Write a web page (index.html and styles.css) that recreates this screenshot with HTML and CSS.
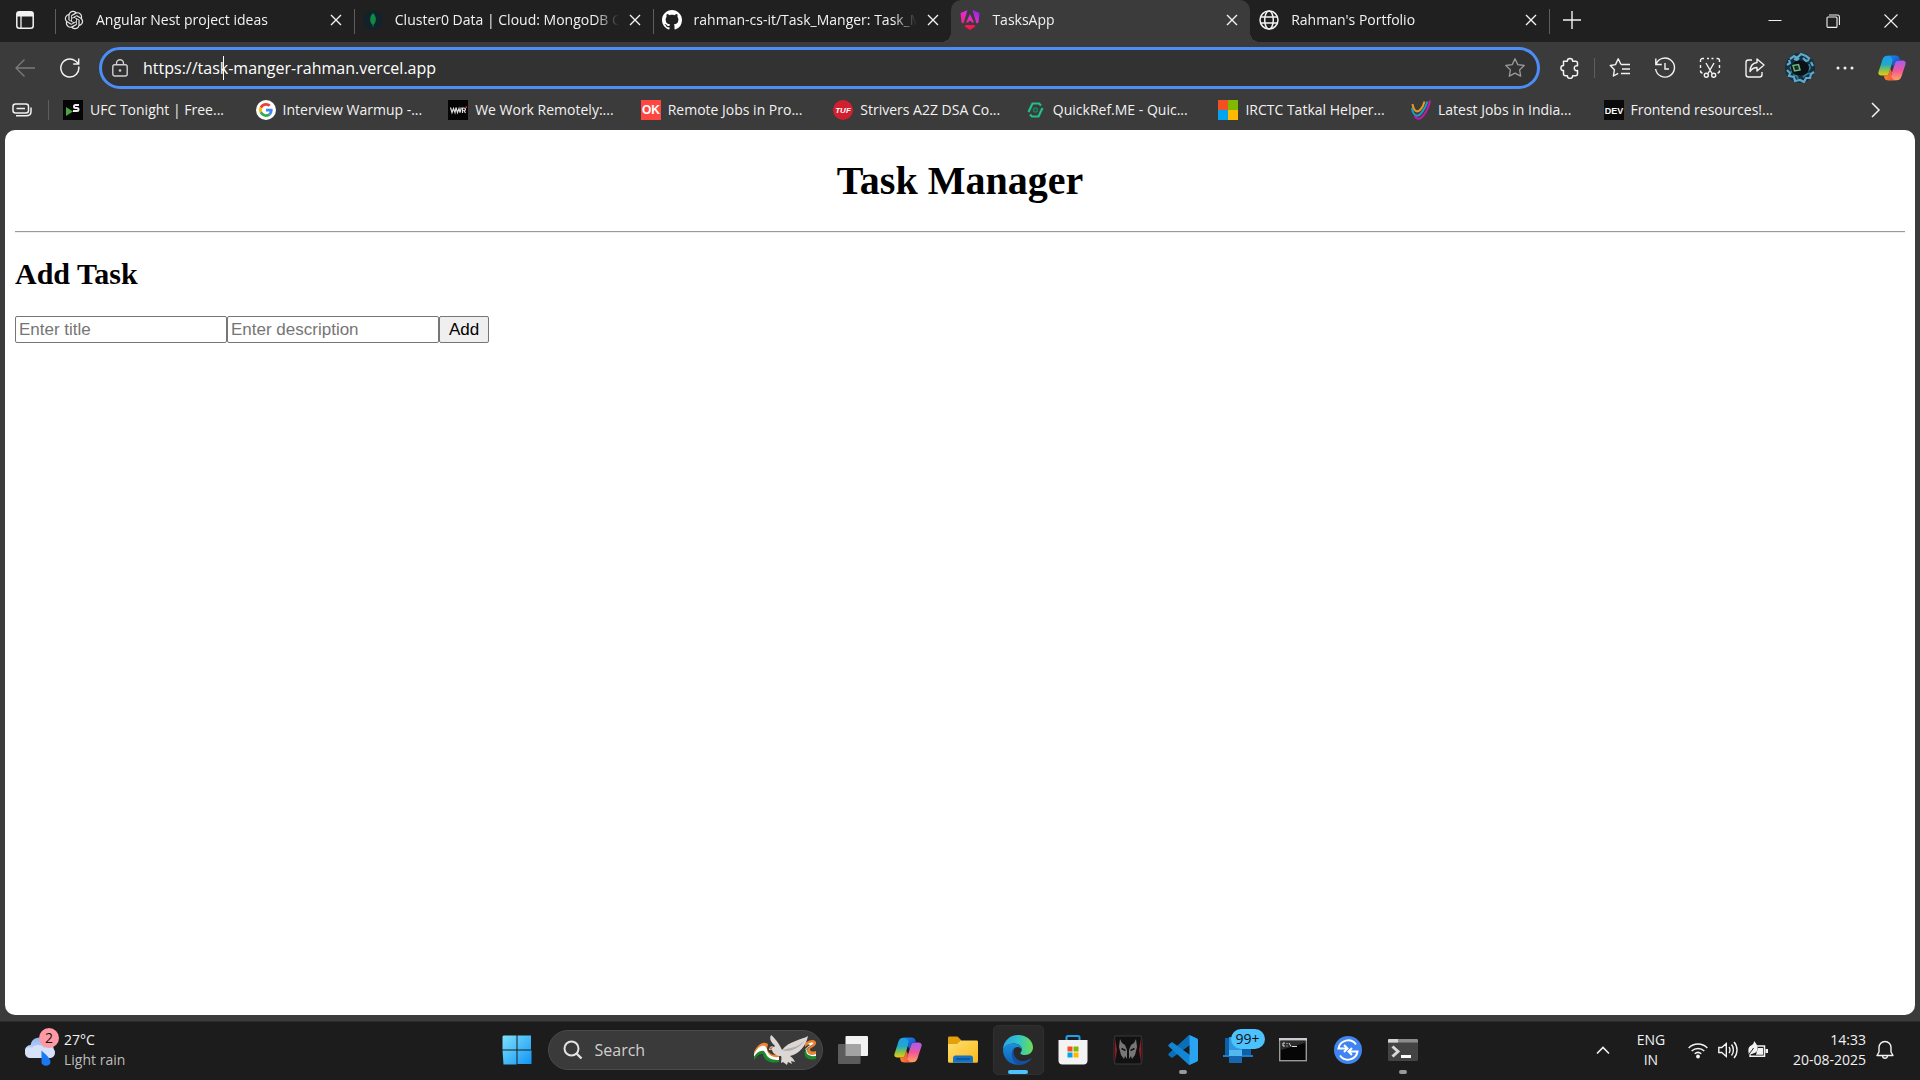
FILE: index.html
```html
<!DOCTYPE html>
<html lang="en">
<head>
<meta charset="utf-8">
<title>TasksApp</title>
<link rel="stylesheet" href="styles.css">
</head>
<body>
<svg class="defs" aria-hidden="true">
  <defs>
    <linearGradient id="cpA" x1="0" y1="0" x2="0" y2="1"><stop offset="0" stop-color="#1a9df0"/><stop offset=".45" stop-color="#24a9c8"/><stop offset=".75" stop-color="#8ec63f"/><stop offset="1" stop-color="#f5c518"/></linearGradient>
    <linearGradient id="cpB" x1="0" y1="0" x2="0" y2="1"><stop offset="0" stop-color="#a45cf5"/><stop offset=".5" stop-color="#f0569a"/><stop offset="1" stop-color="#ffa45c"/></linearGradient>
    <linearGradient id="cpC" x1="0" y1="0" x2="1" y2="1"><stop offset="0" stop-color="#1a8df5"/><stop offset="1" stop-color="#1741b8"/></linearGradient>
    <linearGradient id="cpD" x1="0" y1="0" x2="1" y2="0"><stop offset="0" stop-color="#f7892c"/><stop offset="1" stop-color="#f0453c"/></linearGradient>
    <linearGradient id="winG" x1="0" y1="0" x2="1" y2="1"><stop offset="0" stop-color="#7fe0fb"/><stop offset="1" stop-color="#0f95f5"/></linearGradient>
    <linearGradient id="ngG" x1="0" y1="1" x2="1" y2="0"><stop offset="0" stop-color="#f0267a"/><stop offset=".5" stop-color="#e32bd0"/><stop offset="1" stop-color="#7a22f0"/></linearGradient>
    <linearGradient id="cloudG" x1="0" y1="0" x2="0" y2="1"><stop offset="0" stop-color="#8fb4f2"/><stop offset="1" stop-color="#dfe9fb"/></linearGradient>
    <linearGradient id="folderG" x1="0" y1="0" x2="1" y2="1"><stop offset="0" stop-color="#ffdf70"/><stop offset="1" stop-color="#fbb91a"/></linearGradient>
    <linearGradient id="edgeA" x1="0" y1="0" x2="1" y2="0"><stop offset="0" stop-color="#2aa5e0"/><stop offset=".5" stop-color="#2fc3cf"/><stop offset="1" stop-color="#6be04f"/></linearGradient>
    <linearGradient id="edgeB" x1="0" y1="0" x2="0" y2="1"><stop offset="0" stop-color="#1b8fdc"/><stop offset="1" stop-color="#0f5fb8"/></linearGradient>
    <symbol id="copilot" viewBox="0 0 28 28">
      <path d="M18.5 2.500h-9C6 2.500 5.200 5.500 4.200 9L1.400 17.500C.6 20 2.500 21 4.500 21h3.500c2 0 2.800-1 3.400-3l3.400-11c.6-2.500 1.500-4.500 3.700-4.500z" fill="url(#cpA)"/>
      <path d="M9.500 25.500h9c3.500 0 4.300-3 5.300-6.500l2.800-8.500c.8-2.500-1.100-3.500-3.100-3.500h-3.500c-2 0-2.800 1-3.400 3l-3.400 11c-.6 2.500-1.500 4.500-3.700 4.500z" fill="url(#cpB)"/>
      <path d="M10 2.500h8.500c2 0 2.600 2 3 4.500h-1.500c-2 0-2.800 1-3.400 3l-1 3-1.800-3 1-3c-1-3-2.300-4.500-4.800-4.500z" fill="url(#cpC)"/>
      <path d="M18 25.500H9.500c-2 0-2.600-2-3-4.500H8c2 0 2.800-1 3.400-3l1-3.300 1.600 3.300-1 3.500c1 2.500 2.500 4 5 4z" fill="url(#cpD)"/>
    </symbol>
    <symbol id="close" viewBox="0 0 12 12"><path d="M1 1l10 10M11 1L1 11" fill="none" stroke="currentColor" stroke-width="1.400"/></symbol>
    <symbol id="globe" viewBox="0 0 20 20"><g fill="none" stroke="currentColor" stroke-width="1.500"><circle cx="10" cy="10" r="9"/><ellipse cx="10" cy="10" rx="4.300" ry="9"/><path d="M1.800 7h16.400M1.800 13h16.400"/></g></symbol>
  </defs>
</svg>

<header class="browser">
  <div class="tabstrip">
    <button class="workspace" aria-label="Tab actions">
      <svg width="18" height="18" viewBox="0 0 18 18"><rect x=".8" y=".8" width="16.400" height="16.400" rx="2.500" fill="none" stroke="currentColor" stroke-width="1.500"/><path d="M1 1h16v4.500H1z" fill="currentColor"/><path d="M5 5v12" stroke="currentColor" stroke-width="1.300"/></svg>
    </button>
    <nav class="tabs">
      <div class="tab">
        <svg class="favicon" viewBox="-1 -1 26 26"><path fill="#e6e6e6" d="M22.2819 9.8211a5.9847 5.9847 0 0 0-.5157-4.9108 6.0462 6.0462 0 0 0-6.5098-2.9A6.0651 6.0651 0 0 0 4.9807 4.1818a5.9847 5.9847 0 0 0-3.9977 2.9 6.0462 6.0462 0 0 0 .7427 7.0966 5.98 5.98 0 0 0 .511 4.9107 6.051 6.051 0 0 0 6.5146 2.9001A5.9847 5.9847 0 0 0 13.2599 24a6.0557 6.0557 0 0 0 5.7718-4.2058 5.9894 5.9894 0 0 0 3.9977-2.9001 6.0557 6.0557 0 0 0-.7475-7.0729zm-9.022 12.6081a4.4755 4.4755 0 0 1-2.8764-1.0408l.1419-.0804 4.7783-2.7582a.7948.7948 0 0 0 .3927-.6813v-6.7369l2.02 1.1686a.071.071 0 0 1 .038.052v5.5826a4.504 4.504 0 0 1-4.4945 4.4944zm-9.6607-4.1254a4.4708 4.4708 0 0 1-.5346-3.0137l.142.0852 4.783 2.7582a.7712.7712 0 0 0 .7806 0l5.8428-3.3685v2.3324a.0804.0804 0 0 1-.0332.0615L9.74 19.9502a4.4992 4.4992 0 0 1-6.1408-1.6464zM2.3408 7.8956a4.485 4.485 0 0 1 2.3655-1.9728V11.6a.7664.7664 0 0 0 .3879.6765l5.8144 3.3543-2.0201 1.1685a.0757.0757 0 0 1-.071 0l-4.8303-2.7865A4.504 4.504 0 0 1 2.3408 7.872zm16.5963 3.8558L13.1038 8.364 15.1192 7.2a.0757.0757 0 0 1 .071 0l4.8303 2.7913a4.4944 4.4944 0 0 1-.6765 8.1042v-5.6772a.79.79 0 0 0-.407-.667zm2.0107-3.0231l-.142-.0852-4.7735-2.7818a.7759.7759 0 0 0-.7854 0L9.409 9.2297V6.8974a.0662.0662 0 0 1 .0284-.0615l4.8303-2.7866a4.4992 4.4992 0 0 1 6.6802 4.66zM8.3065 12.863l-2.02-1.1638a.0804.0804 0 0 1-.038-.0567V6.0742a4.4992 4.4992 0 0 1 7.3757-3.4537l-.142.0805L8.704 5.459a.7948.7948 0 0 0-.3927.6813zm1.0976-2.3654l2.602-1.4998 2.6069 1.4998v2.9994l-2.5974 1.4997-2.6067-1.4997Z"/></svg>
        <a class="title" href="#">Angular Nest project ideas</a>
        <button class="tab-close" aria-label="Close tab"><svg width="12" height="12"><use href="#close"/></svg></button>
      </div>
      <div class="tab">
        <svg class="favicon" viewBox="0 0 20 20"><circle cx="10" cy="10" r="9.500" fill="#10222b"/><path d="M10 3c3.500 3.500 4 8.500.4 12l-.1 2h-.6l-.1-2C6 11.500 6.500 6.500 10 3z" fill="#138a43"/></svg>
        <a class="title" href="#">Cluster0 Data | Cloud: MongoDB C</a>
        <button class="tab-close" aria-label="Close tab"><svg width="12" height="12"><use href="#close"/></svg></button>
      </div>
      <div class="tab">
        <svg class="favicon" viewBox="0 0 16 16"><path fill="#fff" d="M8 0C3.580 0 0 3.580 0 8c0 3.540 2.290 6.530 5.470 7.590.4.070.55-.17.55-.38 0-.19-.01-.82-.01-1.490-2.010.37-2.530-.49-2.690-.94-.09-.23-.48-.94-.82-1.130-.28-.15-.68-.52-.01-.53.63-.01 1.080.58 1.230.82.72 1.210 1.870.87 2.330.66.07-.52.28-.87.51-1.070-1.780-.2-3.640-.89-3.640-3.950 0-.87.31-1.590.82-2.150-.08-.2-.36-1.020.08-2.120 0 0 .67-.21 2.200.82.64-.18 1.320-.27 2-.27s1.360.09 2 .27c1.530-1.040 2.200-.82 2.200-.82.44 1.100.16 1.920.08 2.120.51.56.82 1.270.82 2.150 0 3.070-1.870 3.750-3.650 3.950.29.25.54.73.54 1.480 0 1.070-.01 1.930-.01 2.200 0 .21.15.46.55.38A8.010 8.010 0 0 0 16 8c0-4.420-3.580-8-8-8z"/></svg>
        <a class="title" href="#">rahman-cs-it/Task_Manger: Task_M</a>
        <button class="tab-close" aria-label="Close tab"><svg width="12" height="12"><use href="#close"/></svg></button>
      </div>
      <div class="tab active">
        <svg class="favicon" viewBox="0 0 20 20"><path fill="url(#ngG)" d="M.5 3L7.500 0 3.500 13.500 1.500 12.500zM19.500 3L12.500 0l4 13.500 2-1zM10 4l4 8.500h-2.500l-.5-1.500H9l-.5 1.500H6z"/><path fill="#fb1455" d="M5.500 15h9l.8 1.500L10 20l-5.300-3.500z"/></svg>
        <a class="title" href="#">TasksApp</a>
        <button class="tab-close" aria-label="Close tab"><svg width="12" height="12"><use href="#close"/></svg></button>
      </div>
      <div class="tab after-active">
        <svg class="favicon"><use href="#globe"/></svg>
        <a class="title" href="#">Rahman's Portfolio</a>
        <button class="tab-close" aria-label="Close tab"><svg width="12" height="12"><use href="#close"/></svg></button>
      </div>
    </nav>
    <button class="new-tab" aria-label="New tab"><svg width="18" height="18" viewBox="0 0 18 18"><path d="M9 0v18M0 9h18" stroke="currentColor" stroke-width="1.400"/></svg></button>
    <div class="window-buttons">
      <button aria-label="Minimize"><svg width="14" height="14" viewBox="0 0 14 14"><path d="M.5 6.500h13" stroke="currentColor"/></svg></button>
      <button aria-label="Restore"><svg width="14" height="14" viewBox="0 0 14 14"><g fill="none" stroke="currentColor" stroke-width="1.100"><rect x="1" y="3" width="10" height="10.400" rx="1"/><path d="M3 1h8.500c1 0 1.900.9 1.900 1.900V11"/></g></svg></button>
      <button aria-label="Close window"><svg width="14" height="14" viewBox="0 0 14 14"><path d="M.5.5l13 13M13.500.5l-13 13" stroke="currentColor" stroke-width="1.100"/></svg></button>
    </div>
  </div>

  <div class="toolbar">
    <button class="tool dim" aria-label="Back"><svg width="20" height="20" viewBox="0 0 20 20"><path d="M20 10H1M9.500 1.500L1 10l8.500 8.500" fill="none" stroke="currentColor" stroke-width="1.300"/></svg></button>
    <button class="tool" aria-label="Refresh"><svg width="20" height="20" viewBox="0 0 20 20"><path d="M18.700 8.500A9 9 0 1 1 15.500 3L18.500 5.500M18.700.500v5.500h-5.500" fill="none" stroke="currentColor" stroke-width="1.500"/></svg></button>
    <div class="address">
      <svg class="lock" width="16" height="18" viewBox="0 0 16 18"><rect x=".8" y="5.800" width="14.400" height="11.200" rx="2" fill="none" stroke="currentColor" stroke-width="1.400"/><path d="M4.500 6V4.300a3.500 3.500 0 0 1 7 0V6" fill="none" stroke="currentColor" stroke-width="1.400"/><circle cx="8" cy="11.500" r="1.300" fill="currentColor"/></svg>
      <div class="url-box">
        <input class="url" type="text" aria-label="Address" value="https://task-manger-rahman.vercel.app">
        <span class="caret"></span>
      </div>
      <button class="star" aria-label="Add to favorites"><svg width="22" height="22" viewBox="0 0 22 22"><path d="M11 1.800l2.800 5.800 6.400.9-4.600 4.400 1.100 6.300-5.700-3-5.700 3 1.100-6.300L1.800 8.500l6.400-.9z" fill="none" stroke="currentColor" stroke-width="1.300" stroke-linejoin="round"/></svg></button>
    </div>
    <button class="tool" aria-label="Extensions"><svg width="22" height="22" viewBox="0 0 22 22"><path d="M4.500 4.300h3.800a2.700 2.700 0 0 1 5.400 0h2.800c1 0 2 .8 2 2v2.500c-4.300-1-4.300 5.800 0 4.800v3.100c0 1.200-.9 2-2 2h-2.800a2.700 2.700 0 0 1-5.400 0H6.500c-1.200 0-2-.9-2-2v-3.100a2.600 2.600 0 0 1 0-5.200z" fill="none" stroke="currentColor" stroke-width="1.500" stroke-linejoin="round"/></svg></button>
    <span class="rule"></span>
    <button class="tool" aria-label="Favorites"><svg width="22" height="22" viewBox="0 0 22 22"><path d="M12 7.500L9.200 1.800 6.500 7.600l-5.200.9 4.100 4.300-1 6.200 4.800-2.600M12 7.500h9M13 12h8M12 16.500h9" fill="none" stroke="currentColor" stroke-width="1.400" stroke-linejoin="round"/></svg></button>
    <button class="tool" aria-label="History"><svg width="22" height="22" viewBox="0 0 22 22"><path d="M2 7.500A9.500 9.500 0 1 1 1.600 12M1.800 1.500v6h6M11 6v6h4" fill="none" stroke="currentColor" stroke-width="1.400"/></svg></button>
    <button class="tool" aria-label="Screenshot"><svg width="22" height="22" viewBox="0 0 22 22"><g fill="none" stroke="currentColor" stroke-width="1.400"><path d="M1.500 5V3.500c0-1 .8-2 2-2H5M8 1.500h2M12.500 1.500h2M17.500 1.500h1c1.200 0 2 1 2 2V5M20.500 8v3M20.500 13.500c0 1.500-.8 2.500-2 2.500M1.500 8v3M1.500 13.500c0 1.500.8 2.500 2 2.500M7 6l6 10.500M15 6L9 16.500"/><circle cx="7.300" cy="18.300" r="2"/><circle cx="14.700" cy="18.300" r="2"/></g></svg></button>
    <button class="tool" aria-label="Share"><svg width="22" height="22" viewBox="0 0 22 22"><path d="M8 3H4.500c-1.500 0-2.500 1-2.500 2.500v12C2 19 3 20 4.500 20h11c1.500 0 2.500-1 2.500-2.500V15M13 2l7 6-7 6v-3.500c-3 0-5 1-7 4 .2-5 3-8.500 7-9z" fill="none" stroke="currentColor" stroke-width="1.400" stroke-linejoin="round"/></svg></button>
    <button class="tool" aria-label="Profile"><svg width="30" height="30" viewBox="0 0 30 30"><circle cx="15" cy="15" r="15" fill="#14303f"/><g fill="none" stroke="#5fa9cc"><path d="M5 6l4-3 3 2 4-4 5 2 4 3M2 12l3-2-1-3M26 9l2 4M9 6l3 1 2-2M18 5l3 3 3-1" stroke-width="2.200"/><path d="M2 17l3 3-1 3 5 1 1 4 5-1 4 2 2-4 4 0 1-4 3-2" stroke-width="2.200"/><path d="M5 14l2 3-1 3M8 22l4 1 1 3M18 24l4-3 3-1M24 11l1 4-2 3" stroke="#3a7896" stroke-width="1.800"/></g><ellipse cx="15" cy="15" rx="9" ry="7.500" fill="#0b1216"/><path d="M8 12.500l5.500-1 1.500 5.500-5.500 1z" fill="#15301f" stroke="#6fb583" stroke-width="1.500"/></svg></button>
    <button class="tool" aria-label="Settings and more"><svg width="18" height="4" viewBox="0 0 18 4"><g fill="currentColor"><circle cx="2" cy="2" r="1.500"/><circle cx="9" cy="2" r="1.500"/><circle cx="16" cy="2" r="1.500"/></g></svg></button>
    <button class="tool copilot" aria-label="Copilot"><svg width="30" height="30"><use href="#copilot"/></svg></button>
  </div>

  <div class="bookmarks">
    <button class="tool" aria-label="Saved tabs"><svg width="20" height="16" viewBox="0 0 20 16"><g fill="none" stroke="currentColor" stroke-width="1.500"><rect x="1" y="2" width="15.500" height="9" rx="2.500"/><path d="M4.500 6.500h8.500M4 13.800h10c3 0 5-1.800 5-4.300V5.500"/></g></svg></button>
    <span class="rule"></span>
    <nav class="links">
      <a href="#"><svg viewBox="0 0 20 20"><path d="M0 0h20v20H0z" fill="#050505"/><path d="M3 7l7 4.500L3 16z" fill="#47a83c"/><path d="M16 5h-3.500a1.500 1.500 0 0 0 0 3H14a1.500 1.500 0 0 1 0 3h-4" fill="none" stroke="#eee" stroke-width="2"/></svg>UFC Tonight | Free...</a>
      <a href="#"><svg viewBox="0 0 20 20"><circle cx="10" cy="10" r="10" fill="#fff"/><g transform="translate(3 3) scale(.29)"><path fill="#ea4335" d="M24 9.500c3.540 0 6.710 1.220 9.210 3.600l6.850-6.850C35.900 2.380 30.470 0 24 0 14.620 0 6.510 5.380 2.560 13.220l7.980 6.190C12.430 13.720 17.740 9.500 24 9.500z"/><path fill="#4285f4" d="M46.980 24.550c0-1.570-.15-3.090-.38-4.550H24v9.020h12.940c-.58 2.960-2.260 5.480-4.780 7.180l7.730 6c4.510-4.180 7.090-10.360 7.090-17.650z"/><path fill="#fbbc05" d="M10.530 28.590c-.48-1.450-.76-2.990-.76-4.590s.27-3.140.76-4.590l-7.980-6.190C.92 16.460 0 20.120 0 24c0 3.880.92 7.540 2.560 10.780l7.970-6.190z"/><path fill="#34a853" d="M24 48c6.480 0 11.930-2.130 15.890-5.810l-7.730-6c-2.150 1.450-4.920 2.300-8.160 2.300-6.260 0-11.570-4.220-13.470-9.910l-7.980 6.190C6.510 42.620 14.620 48 24 48z"/></g></svg>Interview Warmup -...</a>
      <a href="#"><svg viewBox="0 0 20 20"><path d="M0 0h20v20H0z" fill="#050505"/><path d="M2.500 7.500l1.500 5L5.500 8.500 7 12.500l1-5 1.500 5 1.500-4 1 4 1.300-5M14.500 13V8h1.500c2 0 2 2.500 0 2.500l1.500 2.500" fill="none" stroke="#ddd" stroke-width="1.200"/><path d="M17.500 6.500h1.500v1.500h-1.500z" fill="#e33"/></svg>We Work Remotely:...</a>
      <a href="#"><svg viewBox="0 0 20 20"><path d="M0 0h20v20H0z" fill="#ff4742"/><text x="10" y="14" text-anchor="middle" class="logo-ok">OK</text></svg>Remote Jobs in Pro...</a>
      <a href="#"><svg viewBox="0 0 20 20"><circle cx="10" cy="10" r="10" fill="#d11f30"/><text x="10" y="13" text-anchor="middle" class="logo-tuf">TUF</text></svg>Strivers A2Z DSA Co...</a>
      <a href="#"><svg viewBox="0 0 20 20"><g fill="none" stroke="#1fc18a" stroke-width="2.200"><path d="M2.500 12l4-8.500h6.500l2 2M16.500 8l-4 8.500H6l-2-2"/><circle cx="9.500" cy="10" r="2" stroke="#17845f" stroke-width="1.500"/></g></svg>QuickRef.ME - Quic...</a>
      <a href="#"><svg viewBox="0 0 20 20"><path d="M0 0h10v10H0z" fill="#f25022"/><path d="M10 0h10v10H10z" fill="#7fba00"/><path d="M0 10h10v10H0z" fill="#00a4ef"/><path d="M10 10h10v10H10z" fill="#ffb900"/></svg>IRCTC Tatkal Helper...</a>
      <a href="#"><svg viewBox="0 0 20 20"><g fill="none" stroke-width="2"><path d="M1.500 4c1 7 4.500 9 7.500 6s4-6 4.500-8.500" stroke="#e89a1c"/><path d="M1 8c1 8 5.500 9.500 9 5.500S15.500 5 16.500 1.500" stroke="#1e9cc9"/><path d="M3.500 16c2.500 4 6 3.500 9-.5S18.500 5 19 .5" stroke="#c41cae"/></g></svg>Latest Jobs in India...</a>
      <a href="#"><svg viewBox="0 0 20 20"><path d="M0 0h20v20H0z" fill="#0a0a0a"/><text x="10" y="14" text-anchor="middle" class="logo-dev">DEV</text></svg>Frontend resources!...</a>
    </nav>
    <button class="more" aria-label="More favorites"><svg width="10" height="16" viewBox="0 0 10 16"><path d="M1 1l7 7-7 7" fill="none" stroke="currentColor" stroke-width="1.500"/></svg></button>
  </div>
</header>

<main class="page">
  <h1>Task Manager</h1>
  <hr>
  <h2>Add Task</h2>
  <form class="task-form">
    <input type="text" placeholder="Enter title" aria-label="Title">
    <input type="text" placeholder="Enter description" aria-label="Description">
    <button type="button">Add</button>
  </form>
</main>

<footer class="taskbar">
  <button class="weather">
    <span class="weather-icon">
      <svg width="30" height="30" viewBox="0 0 30 30"><path d="M6 21a6 6 0 0 1-.5-12A9 9 0 0 1 22 6a8 8 0 0 1 2.500 15z" fill="url(#cloudG)"/><path d="M0 16c0-4 4-6 7-4 3-4 10-4 12 0 5-2 11 0 11 4s-2 6-6 6H6c-4 0-6-2-6-6z" fill="#d5e1f8"/><path d="M16.500 14.500c4 4 9 7.500 9 11.500 0 5-9 5-9 0z" fill="#1a78f2"/></svg>
      <span class="badge alert">2</span>
    </span>
    <span class="stack"><span>27°C</span><span class="muted">Light rain</span></span>
  </button>

  <nav class="apps">
    <button class="app" aria-label="Start"><svg width="30" height="30" viewBox="0 0 30 30"><path fill="url(#winG)" d="M1.500.5H14.500V14.500H.5V1.500zM15.500.5h13.500v14H15.500zM.5 15.500h14v14H1.500zM15.500 15.500h14v13.500H15.500z"/></svg></button>
    <label class="search">
      <svg width="20" height="20" viewBox="0 0 20 20"><circle cx="8.500" cy="8.500" r="7" fill="none" stroke="#e3e3e3" stroke-width="2"/><path d="M13.500 13.500l5 5" stroke="#e3e3e3" stroke-width="2.400"/></svg>
      <input type="text" placeholder="Search" aria-label="Search">
      <svg class="dove" width="64" height="30" viewBox="0 0 64 30"><path d="M1 17C5 9 10 6 15 9l-1 5c2 5 6 7 12 5v3c-8 3-14 0-15-7-4 0-7 2-10 6z" fill="#f0832c"/><path d="M1 19c4-7 7-9 11-8l2 3c0 5 5 9 12 8v3c-8 1-14-2-15-8-4-1-7 1-10 5z" fill="#fff"/><path d="M1 22c3-5 6-7 10-6l2 3c2 5 7 6 13 6v2c-8 2-15-1-16-8-3-1-6 2-9 6z" fill="#1c8a2c"/><path d="M52 8c5-4 11-4 11 0 0 3-4 4-6 6 0 3 3 3 6 2v3c-5 2-9 0-9-4 1-3 5-4 6-6-3-1-5 1-8 3z" fill="#f0832c"/><path d="M55 9c3-2 6-2 5 0-2 2-6 3-6 6 0 4 4 6 9 4v2c-6 3-11 0-11-5 0-3 3-4 5-6z" fill="#fff"/><path d="M55 12c-4 5-1 10 8 9v3c-9 2-13-3-11-9z" fill="#1c8a2c"/><path d="M18 0c1 0 9 9 11 15C36 6 48 5 55 1c-2 10-9 18-18 20 3 2 4 4 5 6l-4-1 1 3-4-2-1 3-4-3-2 1c0-3 1-5 0-7-4 0-8-2-9-6l-3 0c0-2 2-5 5-3l1-1C18 7 16 4 18 0z" fill="#dcd7d3"/><path d="M29 15c7 3 17-1 23-10-6 7-14 8-23 10z" fill="#b2adb2"/><path d="M16 13l4-1-2 3z" fill="#e0602a"/></svg>
    </label>
    <button class="app" aria-label="Task view"><svg width="30" height="28" viewBox="0 0 30 28"><rect x="7.500" y="0" width="22.500" height="20" rx="1" fill="#f2f2f2"/><rect x="0" y="8" width="22.500" height="20" rx="1" fill="#5c5c5c"/><path d="M7.500 8h15v12h-15z" fill="#a3a3a3"/></svg></button>
    <button class="app" aria-label="Copilot"><svg width="30" height="30"><use href="#copilot"/></svg></button>
    <button class="app" aria-label="File Explorer"><svg width="30" height="28" viewBox="0 0 30 28"><path d="M0 2c0-1 .6-1.500 1.500-1.500h8L13 4v6H0z" fill="#e2a00d"/><path d="M0 8h9l4-3.500h15.500c1 0 1.500.6 1.500 1.500v19c0 1-.6 1.800-1.500 1.800H1.500c-1 0-1.500-.8-1.500-1.800z" fill="url(#folderG)"/><path d="M5 26.800V22c0-1.500 1-2.500 2.500-2.500h15c1.500 0 2.500 1 2.500 2.500v4.800z" fill="#1573c4"/><path d="M8 23h14" stroke="#0d4f94" stroke-width="1.500"/></svg></button>
    <button class="app current" aria-label="Microsoft Edge"><svg width="30" height="30" viewBox="0 0 30 30"><path d="M0 15C0 6 7 0 15 0c9 0 15 6 15 12.500C30 17 26.500 20 22 20c-3 0-5-1-4.500-2.200.8-1 1.300-2 1.300-3.300C18.800 11 15 8.500 11 8.500 5 8.500 1 12 0 15z" fill="url(#edgeA)"/><path d="M0 15C1 10.500 5 8.500 10.500 8.500c4.500 0 8.300 2.500 8.300 6 0-1-2-2.500-4.300-2.500-5 0-8 8.500-1 14.500 2 2 4 2.500 5 2.800C8 32 0 24 0 15z" fill="url(#edgeB)"/><path d="M11.800 13c-3.500 6 1 13 8.200 13 3 0 5.500-1 7.500-2.500.6-.4 1 .1.700.6C25 28.500 20.500 30 17 30 9 29 6 17 11.800 13z" fill="#174fa0"/></svg></button>
    <button class="app" aria-label="Microsoft Store"><svg width="30" height="30" viewBox="0 0 30 30"><path d="M8.500 6V2.500c0-1 .6-1.500 1.500-1.500h10c1 0 1.500.6 1.500 1.500V6" fill="none" stroke="#1fa0e8" stroke-width="2"/><path d="M.5 5h29v20.500c0 2.500-1.500 4-4 4h-21c-2.500 0-4-1.500-4-4z" fill="#f3f3f3"/><path d="M9.500 11.500h5v5h-5z" fill="#f25022"/><path d="M15.500 11.500h5v5h-5z" fill="#7fba00"/><path d="M9.500 17.500h5v5h-5z" fill="#00a4ef"/><path d="M15.500 17.500h5v5h-5z" fill="#ffb900"/></svg></button>
    <button class="app" aria-label="PredatorSense"><svg width="30" height="30" viewBox="0 0 30 30"><path d="M2 1h26l1 4v20l-1 4H2l-1-4V5z" fill="#111" stroke="#3a3a3a"/><path d="M2 3l2 12-2 12zM28 3l-2 12 2 12z" fill="#a3161c"/><path d="M7 4l2 4 3 2 2 5v9l-2-3-1 3-3-4-2-8zM23 4l-2 4-3 2-2 5v9l2-3 1 3 3-4 2-8z" fill="#777"/><path d="M8.500 13.500l4 2M21.500 13.500l-4 2" stroke="#111" stroke-width="1.500"/></svg></button>
    <button class="app running" aria-label="Visual Studio Code"><svg width="30" height="30" viewBox="0 0 30 30"><path d="M21 0l9 4-8 6L4 23 .8 20.500c-.6-.5-.6-1.400 0-2z" fill="#0a6fb8"/><path d="M21 30l9-4-8-6L4 7 .8 9.500c-.6.5-.6 1.400 0 2z" fill="#1485d3"/><path d="M21.500 0l7.500 3.500c.7.300 1 .9 1 1.500v20c0 .6-.3 1.200-1 1.500L21.500 30z" fill="#2aa3f2"/></svg></button>
    <button class="app" aria-label="Phone Link"><svg width="30" height="28" viewBox="0 0 30 28"><path d="M2 2h26v18H2z" fill="#0d5fa6"/><path d="M0 19h30v2H0z" fill="#1a7fd0"/><path d="M6 1h13v26H6z" fill="#2b97df"/><path d="M6 14h13v6H6z" fill="#52b8f0"/><path d="M6 20h13v7H6z" fill="#1667b0"/></svg><span class="badge count">99+</span></button>
    <button class="app" aria-label="Command Prompt"><svg width="28" height="24" viewBox="0 0 28 24"><rect x=".7" y=".7" width="26.600" height="22" fill="#060606" stroke="#9a9a9a" stroke-width="1.400"/><path d="M0 0h28v2.500H0z" fill="#c9ccd0"/><path d="M2 12L26 5V3H2z" fill="#2c2c2c"/><path d="M6 5H4v3h2M8 5v1M8 7.500v1M10 5l2 3.500M13 8.500h5" fill="none" stroke="#ddd"/></svg></button>
    <button class="app" aria-label="Sync"><svg width="28" height="28" viewBox="0 0 28 28"><circle cx="14" cy="14" r="14" fill="#3f84f0"/><g fill="none" stroke="#fff" stroke-width="2"><path d="M22 8.500A9.700 9.700 0 0 0 4.500 12.500H13M10 9l3.500 3.500L10 16M6 19.500a9.700 9.700 0 0 0 17.500-4H15M18 12l-3.500 3.500L18 19"/></g></svg></button>
    <button class="app running" aria-label="Terminal"><svg width="30" height="24" viewBox="0 0 30 24"><rect y="1" width="30" height="22" rx="1.500" fill="#444"/><path d="M0 4.500V2.500C0 1.500.6 1 1.500 1h27c1 0 1.500.6 1.500 1.500v2z" fill="#8b8b8b"/><path d="M0 4.500V2.500C0 1.500.6 1 1.500 1H10v3.500z" fill="#d4d4d4"/><path d="M4.500 8.500l5.500 5-5.500 5" fill="none" stroke="#d9d9d9" stroke-width="3"/><path d="M13 17h10v3H13z" fill="#fff"/></svg></button>
  </nav>

  <div class="tray">
    <button aria-label="Show hidden icons"><svg width="14" height="10" viewBox="0 0 14 10"><path d="M1 8.500l6-6 6 6" fill="none" stroke="currentColor" stroke-width="1.600"/></svg></button>
    <button class="lang">ENG<br>IN</button>
    <button class="status" aria-label="Network, volume, battery">
      <svg width="20" height="18" viewBox="0 0 20 18"><g fill="none" stroke="currentColor" stroke-width="1.500"><path d="M.7 7a13 13 0 0 1 18.600 0M3.700 10a9 9 0 0 1 12.600 0M6.700 12.800a5 5 0 0 1 6.600 0"/></g><circle cx="10" cy="15.500" r="1.900" fill="currentColor"/></svg>
      <svg width="20" height="18" viewBox="0 0 20 18"><path d="M.8 6.500v5h3l4.500 4V2.500l-4.500 4zM11 6c1.300 1.500 1.300 4.500 0 6M13.500 3.500c2.500 3 2.500 8 0 11M16 1c4 4.500 4 11.500 0 16" fill="none" stroke="currentColor" stroke-width="1.400"/></svg>
      <svg width="20" height="18" viewBox="0 0 20 18"><path d="M9 5h7.500v10.300H2V13" fill="none" stroke="currentColor" stroke-width="1.500"/><path d="M10 7h5v6.700H8zM17.500 8H20v4h-2.500z" fill="currentColor"/><path d="M6 0c3 3 5 7 2.500 11C6 13 3 12.500 1 14 0 9 0 6 3 4.500 5 3.500 6 2 6 0z" fill="currentColor"/><path d="M0 16c1-4 4-6 5.500-9" fill="none" stroke="#1c1c1c"/></svg>
    </button>
    <button class="clock"><span>14:33</span><span>20-08-2025</span></button>
    <button aria-label="Notifications"><svg width="18" height="20" viewBox="0 0 18 20"><path d="M9 1.500c3.500 0 6 2.700 6 6V12l2 3.500H1L3 12V7.500c0-3.300 2.500-6 6-6zM6.500 16c.5 3 4.500 3 5 0" fill="none" stroke="currentColor" stroke-width="1.400" stroke-linejoin="round"/></svg></button>
  </div>
</footer>
</body>
</html>
```
FILE: styles.css
```css
:root {
  --chrome: #3b3b3b;
  --strip: #202020;
  --field: #323232;
  --line: #5e5e5e;
  --text: #f2f2f2;
  --ui: "Open Sans", "Noto Sans", sans-serif;
}

* { box-sizing: border-box; }

body {
  margin: 0;
  min-height: 100vh;
  display: flex;
  flex-direction: column;
  background: var(--chrome);
  color: var(--text);
  font: 14px/20px var(--ui);
}

button, input { font: inherit; }

.browser button, .taskbar button {
  display: flex;
  align-items: center;
  justify-content: center;
  flex: none;
  padding: 0;
  border: 0;
  background: none;
  color: inherit;
}

a { color: inherit; text-decoration: none; }

svg { display: block; flex: none; }

.defs { position: absolute; width: 0; height: 0; }

/* Tab strip */
.tabstrip {
  display: flex;
  height: 42px;
  background: var(--strip);
}

.browser .workspace { width: 55px; padding: 0 5px 2px 0; }

.tabs { display: flex; flex: 0 1 1494px; min-width: 0; }

.tab {
  position: relative;
  flex: 1;
  min-width: 0;
  display: flex;
  align-items: center;
  padding: 0 6px 2px 9px;
}

.tab::before, .new-tab::before {
  content: "";
  position: absolute;
  left: 0;
  top: 9px;
  width: 1px;
  height: 25px;
  background: var(--line);
}

.tab.after-active::before { display: none; }

.favicon { width: 20px; height: 20px; margin-right: 12px; }

.title {
  flex: 1;
  min-width: 0;
  overflow: hidden;
  white-space: nowrap;
  mask-image: linear-gradient(to left, transparent 4px, #000 28px);
}

.browser .tab-close { width: 24px; height: 24px; }

.tab.active {
  background: var(--chrome);
  border-radius: 10px 10px 0 0;
}

.tab.active::before, .tab.active::after {
  content: "";
  position: absolute;
  top: auto;
  bottom: 0;
  width: 10px;
  height: 10px;
}

.tab.active::before {
  left: -10px;
  background: radial-gradient(circle at 0 0, var(--strip) 10px, var(--chrome) 10px);
}

.tab.active::after {
  left: 100%;
  background: radial-gradient(circle at 100% 0, var(--strip) 10px, var(--chrome) 10px);
}

.browser .new-tab { position: relative; width: 46px; padding-bottom: 2px; }

.window-buttons { display: flex; margin-left: auto; }

.window-buttons button { width: 58px; }

/* Toolbar */
.toolbar {
  display: flex;
  align-items: center;
  height: 52px;
  padding: 0 3px 0 2px;
}

.toolbar .tool { width: 45px; height: 40px; }

.toolbar .dim { color: #7c7c7c; }

.toolbar .copilot { width: 50px; }

.rule {
  flex: none;
  width: 1px;
  height: 20px;
  margin: 0 2px;
  background: var(--line);
}

.address {
  flex: 1;
  display: flex;
  align-items: center;
  height: 42px;
  margin: 0 7px;
  padding: 0 11px 0 10px;
  gap: 15px;
  border: 3px solid #4c8df6;
  border-radius: 21px;
  background: var(--field);
}

.lock { color: #cfcfcf; }

.url-box { position: relative; flex: 1; display: flex; }

.url {
  flex: 1;
  min-width: 0;
  padding: 0;
  border: 0;
  outline: 0;
  background: none;
  color: #fff;
  font-size: 16px;
  line-height: 24px;
}

.caret {
  position: absolute;
  left: 80px;
  top: 0;
  width: 1px;
  height: 24px;
  background: #fff;
}

.browser .star { color: #9a9a9a; }

/* Bookmarks bar */
.bookmarks {
  display: flex;
  align-items: center;
  height: 36px;
  padding-bottom: 4px;
}

.bookmarks .tool { width: 46px; padding-right: 2px; }

.links {
  display: flex;
  flex: 0 1 1733px;
  min-width: 0;
  margin-left: 12px;
}

.links a {
  flex: 1;
  min-width: 0;
  display: flex;
  align-items: center;
  gap: 7px;
  white-space: nowrap;
}

.links svg { width: 20px; height: 20px; }

.logo-ok, .logo-tuf, .logo-dev {
  fill: #fff;
  font: bold 10px/1 "Liberation Sans", sans-serif;
}

.logo-ok { font-size: 12px; }
.logo-tuf { font-size: 8px; font-style: italic; }
.logo-dev { font-size: 9px; }

.browser .more { margin: 0 39px 0 auto; }

/* Page */
.page {
  flex: 1;
  margin: 0 5px 6px;
  padding: 0 10px;
  border-radius: 10px;
  background: #fff;
  color: #000;
  font-family: "Liberation Serif", serif;
}

.page h1 {
  margin: 28px 0 27px;
  font-size: 40px;
  line-height: 46px;
  text-align: center;
}

.page hr {
  margin: 0;
  border: 0;
  border-top: 1px solid #9a9a9a;
  border-bottom: 1px solid #eee;
}

.page h2 {
  margin: 24px 0 25px;
  font-size: 30px;
  line-height: 34px;
}

.task-form { display: flex; }

.task-form input, .task-form button {
  height: 27px;
  margin: 0;
  border: 1px solid #767676;
  border-radius: 2px;
  font: 17px/20px "Liberation Sans", sans-serif;
}

.task-form input { width: 212px; padding: 0 3px; background: #fff; color: #000; }

.task-form input::placeholder { color: #757575; }

.task-form button { padding: 0 9px; background: #efefef; color: #000; }

/* Taskbar */
.taskbar {
  display: grid;
  grid-template-columns: 1fr auto 1fr;
  height: 59px;
  padding-bottom: 2px;
  border-top: 1px solid #2c2c2c;
  background: #1c1c1c;
}

.taskbar .weather { justify-content: flex-start; padding-left: 25px; gap: 9px; }

.weather-icon { position: relative; margin-top: 2px; }

.stack { display: flex; flex-direction: column; text-align: left; }

.muted { color: #bdbdbd; }

.badge {
  position: absolute;
  height: 20px;
  border-radius: 10px;
  color: #111;
  line-height: 20px;
  text-align: center;
}

.alert { left: 14px; top: -8px; width: 20px; background: #ff99a4; }

.count { left: 20px; top: 4px; width: 34px; background: #4cc2ff; font-size: 14px; }

.apps { display: flex; align-items: center; }

.taskbar .app { position: relative; width: 55px; height: 50px; }

.app.current::before {
  content: "";
  position: absolute;
  inset: 0 2px;
  border: 1px solid #303030;
  border-radius: 5px;
  background: #292929;
}

.app svg { position: relative; }

.app.current::after, .app.running::after {
  content: "";
  position: absolute;
  bottom: 1px;
  width: 8px;
  height: 4px;
  border-radius: 2px;
  background: #9a9a9a;
}

.app.current::after { width: 20px; background: #4cc2ff; }

.search {
  display: flex;
  align-items: center;
  width: 275px;
  height: 40px;
  margin: 0 3px;
  padding: 0 5px 0 14px;
  gap: 12px;
  border: 1px solid #4a4a4a;
  border-radius: 20px;
  background: #3a3a3a;
}

.search input {
  flex: 1;
  min-width: 0;
  padding: 0;
  border: 0;
  background: none;
  color: #fff;
  font-size: 16px;
}

.search input::placeholder { color: #cfcfcf; }

.tray {
  display: flex;
  align-items: center;
  justify-content: flex-end;
  padding-right: 26px;
}

.tray .lang { width: 40px; margin: 0 17px 0 21px; }

.tray .status { gap: 10px; }

.tray .clock {
  flex-direction: column;
  align-items: flex-end;
  margin: 0 10px 0 25px;
}
```
